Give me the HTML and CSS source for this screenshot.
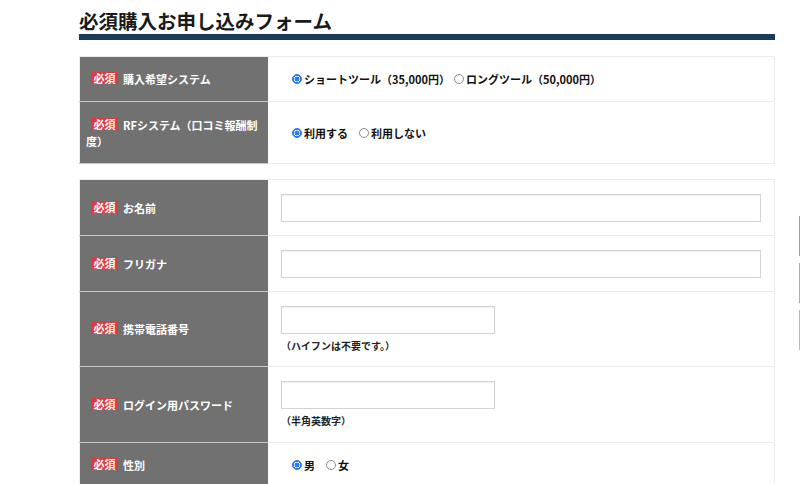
FILE: index.html
```html
<!DOCTYPE html>
<html lang="ja">
<head>
<meta charset="utf-8">
<title>必須購入お申し込みフォーム</title>
<link rel="stylesheet" href="styles.css">
</head>
<body>
<div class="page">
  <h1 class="title">必須購入お申し込みフォーム</h1>
  <div class="title-bar"></div>

  <table class="form-table first">
    <tr class="h45">
      <th><span class="req">必須</span>購入希望システム</th>
      <td>
        <div class="radios tight">
          <label class="opt"><input type="radio" name="sys" checked>ショートツール（35,000円）</label>
          <label class="opt"><input type="radio" name="sys">ロングツール（50,000円）</label>
        </div>
      </td>
    </tr>
    <tr class="h62">
      <th><span class="req">必須</span>RFシステム（口コミ報酬制度）</th>
      <td>
        <div class="radios">
          <label class="opt"><input type="radio" name="rf" checked>利用する</label>
          <label class="opt"><input type="radio" name="rf">利用しない</label>
        </div>
      </td>
    </tr>
  </table>

  <table class="form-table second">
    <tr class="h56">
      <th><span class="req">必須</span>お名前</th>
      <td><input class="text wide" type="text"></td>
    </tr>
    <tr class="h56">
      <th><span class="req">必須</span>フリガナ</th>
      <td><input class="text wide" type="text"></td>
    </tr>
    <tr class="h75">
      <th><span class="req">必須</span>携帯電話番号</th>
      <td><input class="text short" type="text"><p class="note">（ハイフンは不要です。）</p></td>
    </tr>
    <tr class="h76">
      <th><span class="req">必須</span>ログイン用パスワード</th>
      <td><input class="text short" type="password"><p class="note">（半角英数字）</p></td>
    </tr>
    <tr class="h45">
      <th><span class="req">必須</span>性別</th>
      <td>
        <div class="radios">
          <label class="opt"><input type="radio" name="sex" checked>男</label>
          <label class="opt"><input type="radio" name="sex">女</label>
        </div>
      </td>
    </tr>
  </table>
</div>

<div class="side-marks">
  <span class="mark green"></span>
  <span class="mark red"></span>
  <span class="mark orange"></span>
</div>
</body>
</html>
```

FILE: styles.css
```css
html, body {
  margin: 0;
  padding: 0;
  background: #fff;
}
body {
  font-family: "Noto Sans CJK JP", "Noto Sans", sans-serif;
  color: #111;
  overflow: hidden;
}
.page {
  width: 696px;
  margin-left: 79px;
  padding-top: 9px;
}
.title {
  margin: 0;
  font-size: 19.5px;
  line-height: 24px;
  font-weight: 700;
  color: #1a1a1a;
}
.title-bar {
  height: 6px;
  margin-top: 1px;
  background: #1b3a5e;
}
.form-table {
  width: 100%;
  border-collapse: collapse;
  table-layout: fixed;
  border: 1px solid #ececec;
}
.form-table.first { margin-top: 16px; }
.form-table.second { margin-top: 15px; }
.form-table th {
  width: 176px;
  padding: 0 6px;
  background: #717171;
  color: #fff;
  text-align: left;
  font-size: 11px;
  line-height: 16px;
  font-weight: 700;
  vertical-align: middle;
  border-bottom: 1px solid #c9c9c9;
}
.form-table td {
  padding: 0 14px 0 13px;
  vertical-align: middle;
  font-size: 11px;
  font-weight: 700;
  border-bottom: 1px solid #ececec;
}
.h45 { height: 45px; }
.h56 { height: 56px; }
.h62 { height: 62px; }
.h75 { height: 75px; }
.h76 { height: 76px; }

.req {
  display: inline-block;
  margin: 0 5px;
  padding: 0 2.5px;
  background: #df3a3f;
  color: #fff;
  font-size: 11px;
  line-height: 12px;
  vertical-align: 1px;
}
.radios {
  display: flex;
  gap: 11px;
  padding-left: 11px;
  align-items: center;
}
.radios.tight { gap: 4px; }
.opt {
  display: inline-flex;
  align-items: center;
  gap: 2px;
  line-height: 16px;
}
.opt input {
  appearance: none;
  -webkit-appearance: none;
  width: 10px;
  height: 10px;
  margin: 0;
  border: 1px solid #8a8a8a;
  border-radius: 50%;
  background: #fff;
  box-sizing: border-box;
}
.opt input:checked {
  border-color: #2a7bf4;
  background: radial-gradient(circle, #2a7bf4 0 2.2px, #fff 2.7px 3px, #2a7bf4 3.4px);
}
.text {
  display: block;
  height: 28px;
  box-sizing: border-box;
  border: 1px solid #d2d2d2;
  box-shadow: inset 0 1px 1px rgba(0,0,0,0.06);
  background: #fff;
  margin: 0;
  padding: 0 6px;
  font: inherit;
}
.text.wide { width: 480px; }
.text.short { width: 214px; }
.note {
  margin: 5px 0 0 0;
  font-size: 10px;
  line-height: 14px;
  font-weight: 700;
  color: #222;
}
.side-marks {
  position: fixed;
  right: 0;
  top: 216px;
  width: 1px;
  display: flex;
  flex-direction: column;
  gap: 7px;
}
.mark {
  display: block;
  width: 1px;
  height: 40px;
}
.mark.green { background: #6cc36a; }
.mark.red { background: #ec8f8f; }
.mark.orange { background: #f2a582; }
```
